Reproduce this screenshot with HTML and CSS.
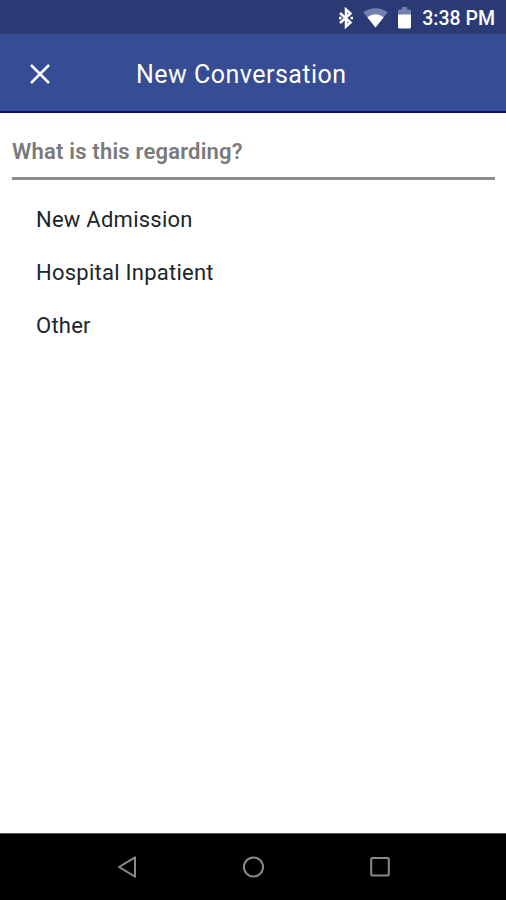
FILE: index.html
```html
<!DOCTYPE html>
<html lang="en">
<head>
    <meta charset="UTF-8">
    <meta name="viewport" content="width=device-width, initial-scale=1.0">
    <title>New Conversation</title>
    <link rel="stylesheet" href="styles.css">
</head>
<body>

    <div class="status-bar">
        <svg class="bluetooth" width="16" height="22" viewBox="0 0 16 22" fill="none" stroke="#fff" stroke-width="2.5">
            <path d="M2 6 L12.5 15.5 L8 19.5 V2.5 L12.5 6.5 L2 16"/>
            <path d="M1 11 h2.5 M12.5 11 h2.5"/>
        </svg>
        <svg class="wifi" width="25" height="20" viewBox="0 0 25 20">
            <path fill="#7680b0" d="M12.5 19.5 L0.3 4.2 Q12.5 -3.6 24.7 4.2 Z"/>
            <path fill="#fff" d="M12.5 19.5 L4.3 9.2 Q12.5 3.4 20.7 9.2 Z"/>
        </svg>
        <svg class="battery" width="13" height="22" viewBox="0 0 13 22">
            <path fill="#7680b0" d="M4 0 h5 v2.5 h2.5 q1.5 0 1.5 1.5 V8 H0 V4 q0 -1.5 1.5 -1.5 H4 Z"/>
            <path fill="#fff" d="M0 7.5 H13 V20 q0 1.5 -1.5 1.5 H1.5 Q0 21.5 0 20 Z"/>
        </svg>
        <span class="time">3:38 PM</span>
    </div>

    <div class="header">
        <button class="close" aria-label="Close">
            <svg width="20" height="20" viewBox="0 0 20 20" stroke="#fff" stroke-width="2.5">
                <path d="M1 1 L19 19 M19 1 L1 19"/>
            </svg>
        </button>
        <h1>New Conversation</h1>
    </div>

    <div class="content">
        <h2>What is this regarding?</h2>
        <ul class="topics">
            <li>New Admission</li>
            <li>Hospital Inpatient</li>
            <li>Other</li>
        </ul>
    </div>

    <div class="nav-bar">
        <svg width="22" height="24" viewBox="0 0 22 24">
            <path d="M19 2.3 V21.7 L3 12 Z"/>
        </svg>
        <svg width="22" height="24" viewBox="0 0 22 24">
            <circle cx="11.5" cy="12" r="9.6"/>
        </svg>
        <svg width="22" height="24" viewBox="0 0 22 24">
            <rect x="2.2" y="3" width="17.6" height="17.6" rx="1"/>
        </svg>
    </div>

</body>
</html>
```

FILE: styles.css
```css
* { box-sizing: border-box; }
body { font-family: Roboto, sans-serif; background: white; margin: 0; height: 100vh; display: flex; flex-direction: column; overflow: hidden; }
.status-bar { height: 34px; flex: none; display: flex; align-items: center; justify-content: flex-end; padding-right: 11px; background: #2b3a75; color: white; }
.bluetooth, .battery { margin-top: 1px; }
.wifi { margin-left: 9px; margin-top: 1px; }
.battery { margin-left: 10px; margin-right: 11px; }
.time { font-size: 19.5px; font-weight: 500; line-height: 22px; padding-top: 3px; }
.header { height: 79px; flex: none; display: flex; align-items: center; background: #364c94; border-bottom: 2px solid #10107c; color: white; }
.close { display: flex; width: 20px; margin: 2px 0 0 30px; padding: 0; background: none; border: none; cursor: pointer; }
h1 { margin: 5px 0 0 86px; font-size: 25px; font-weight: 400; line-height: 30px; letter-spacing: 0.48px; }
.content { flex: 1; padding: 24px 11px 0 12px; }
h2 { margin: 0; padding-bottom: 10px; border-bottom: 3px solid #8c8c8c; color: #7a7a7a; font-size: 22px; font-weight: 600; line-height: 30px; letter-spacing: 0.2px; }
.topics { list-style: none; margin: 14px 0 0; padding: 0 24px; color: #202528; font-size: 22px; letter-spacing: 0.25px; }
.topics li { line-height: 52.8px; }
.nav-bar { height: 67px; flex: none; display: flex; align-items: center; justify-content: center; gap: 104.5px; background: #000; border-top: 1px solid #555; }
.nav-bar svg { fill: none; stroke: #8a8a8a; stroke-width: 2; stroke-linejoin: round; }
```
